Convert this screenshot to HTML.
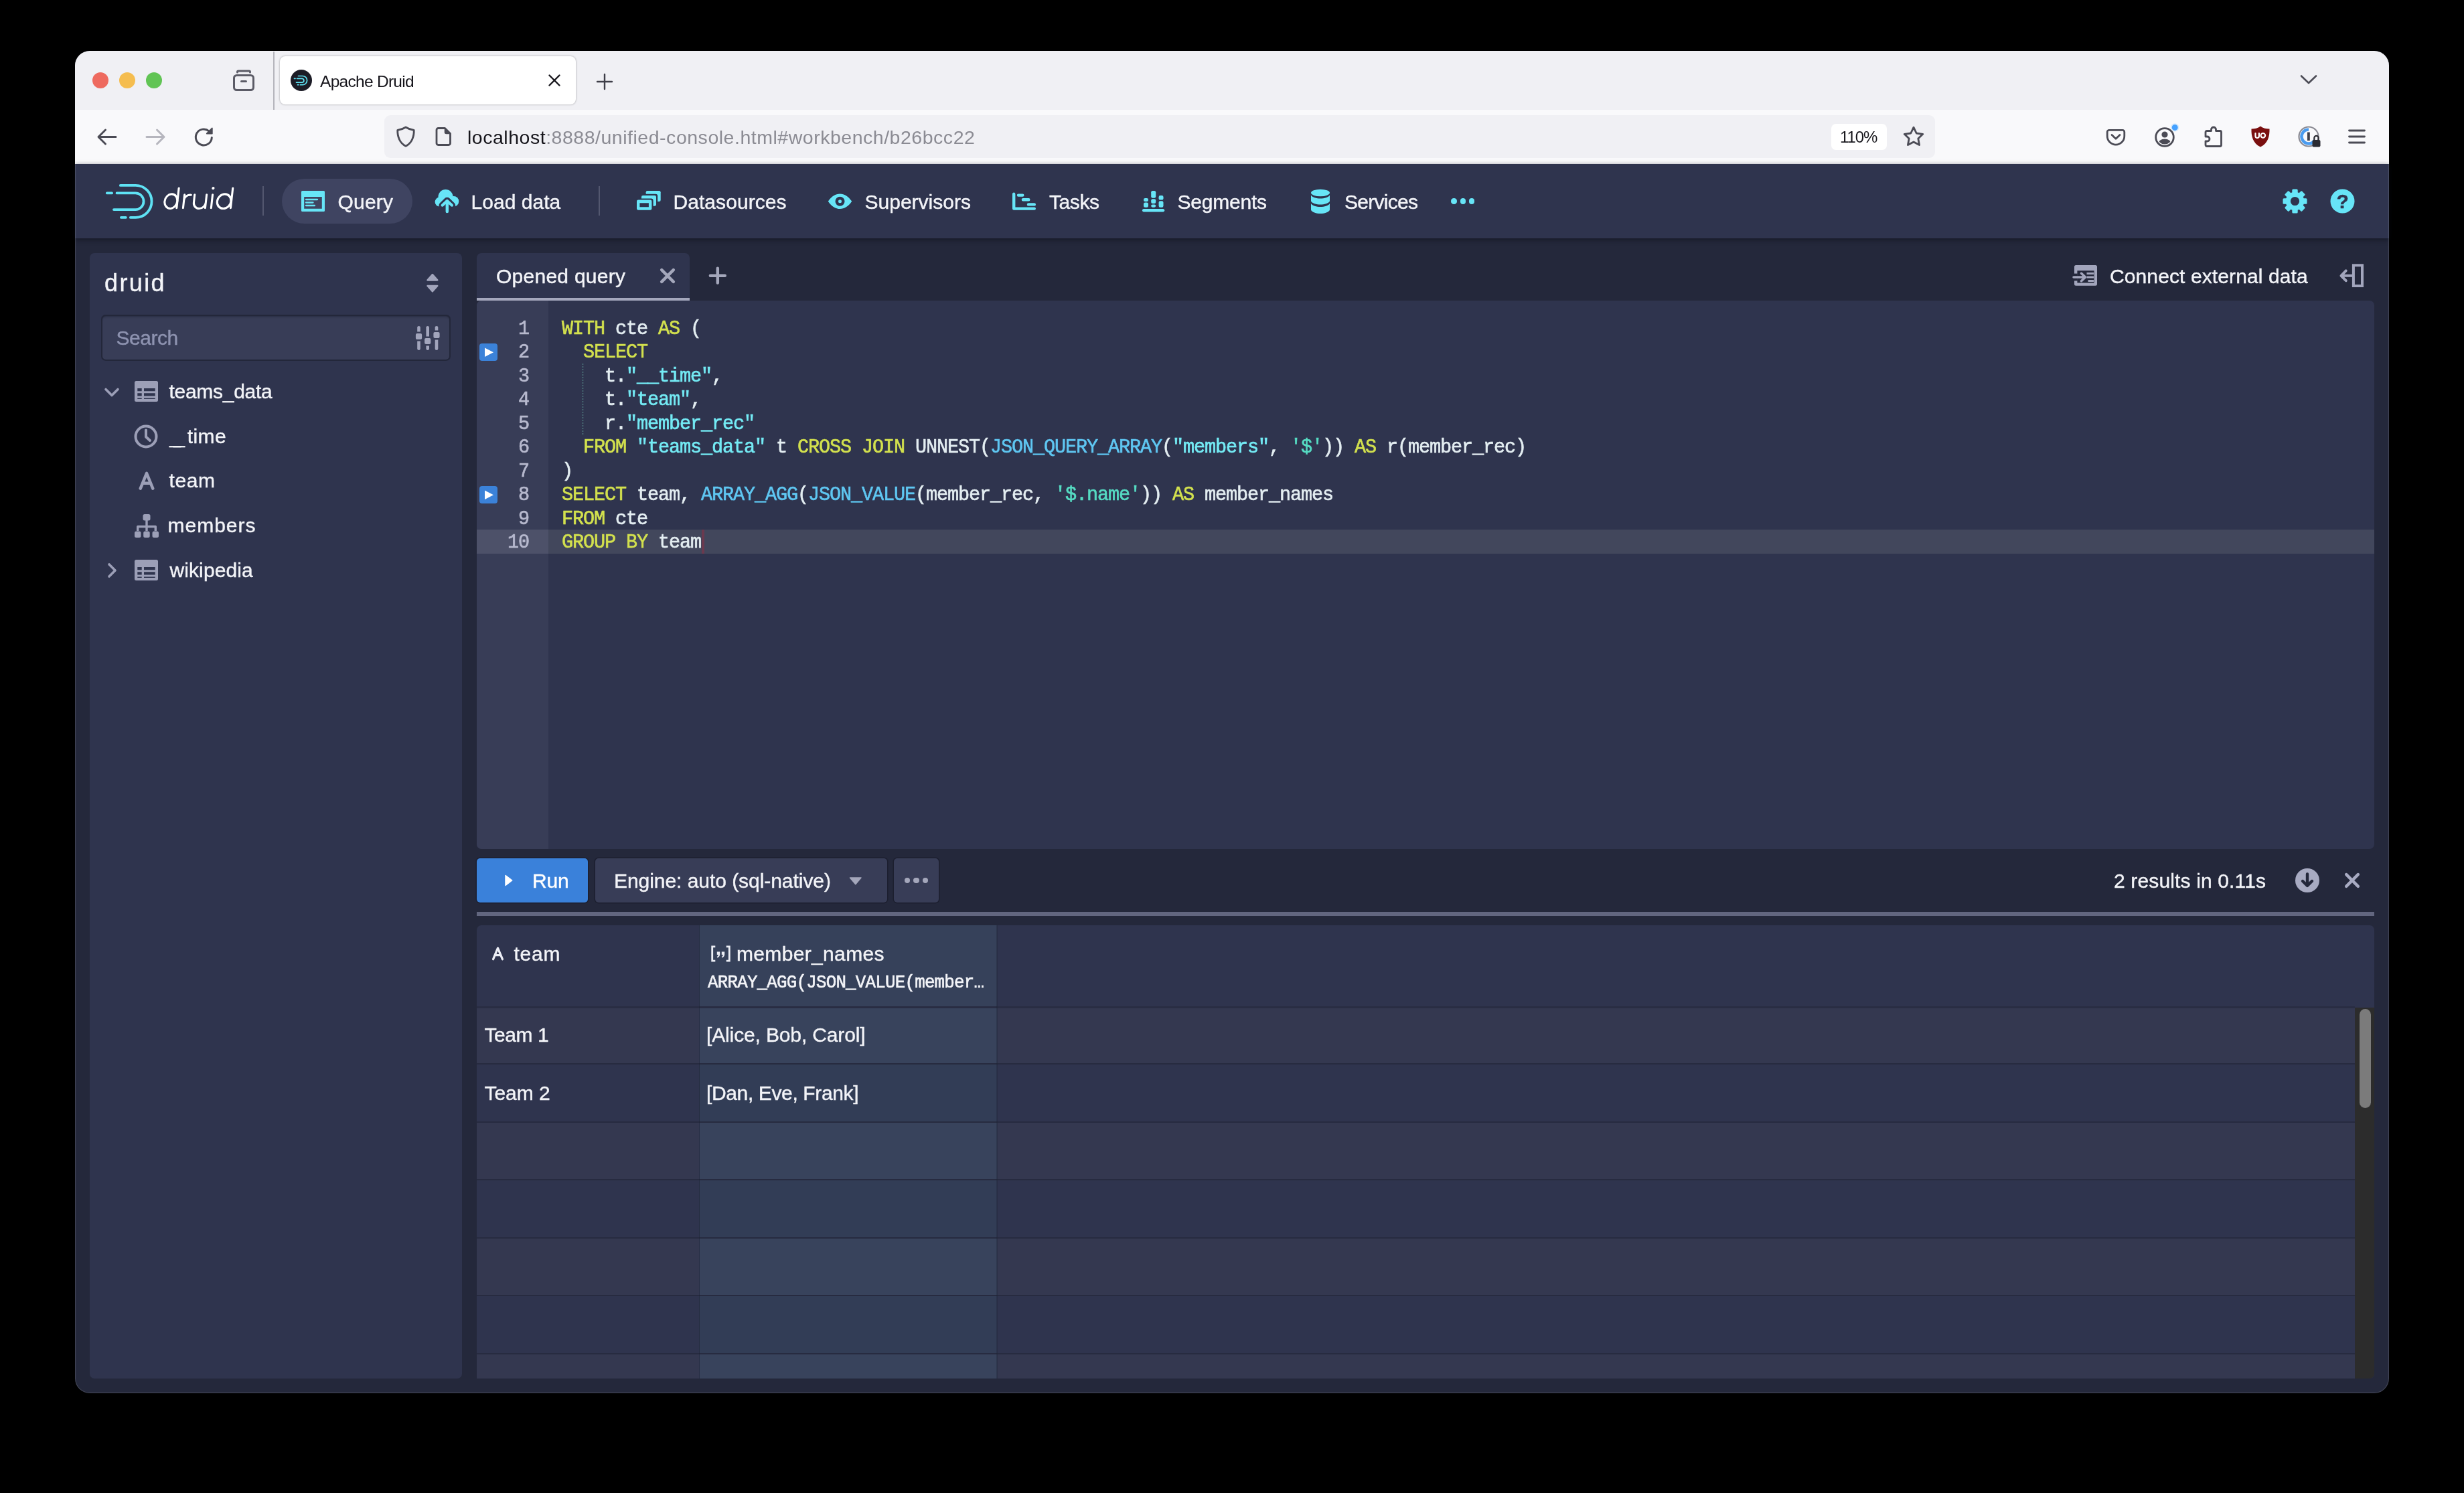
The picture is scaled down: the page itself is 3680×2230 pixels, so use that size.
<!DOCTYPE html>
<html><head><meta charset="utf-8"><title>Apache Druid</title><style>
html,body{margin:0;padding:0;background:#000;}
body{width:3680px;height:2230px;position:relative;overflow:hidden;font-family:"Liberation Sans", sans-serif;}
#r{position:absolute;left:0;top:0;width:3680px;height:2230px;will-change:transform;}
#r div,#r svg,#r span{position:absolute;}
#r span{white-space:pre;line-height:0;}
#r span span{position:static;}
#r .m{font-family:"Liberation Mono", monospace;-webkit-text-stroke:0.600px;}
#r .d{-webkit-text-stroke:0.4px;}
</style></head><body><div id="r">
<div style="left:112px;top:76px;width:3456px;height:2005px;background:#24283b;border-radius:22px;overflow:hidden;"></div>
<div style="left:112px;top:76px;width:3456px;height:88px;background:#f0f0f4;border-radius:22px 22px 0 0;"></div>
<div style="left:112px;top:164px;width:3456px;height:81px;background:#f9f9fb;"></div>
<div style="left:112px;top:245px;width:3456px;height:110.5px;background:#2f344e;box-shadow:0 2px 7px rgba(10,12,22,0.55);"></div>
<div style="left:138px;top:108px;width:24px;height:24px;background:#ee6a5f;border-radius:50%;"></div>
<div style="left:178px;top:108px;width:24px;height:24px;background:#f5bd4f;border-radius:50%;"></div>
<div style="left:218px;top:108px;width:24px;height:24px;background:#61c454;border-radius:50%;"></div>
<div style="left:408.3px;top:77px;width:1.9px;height:87px;background:#b4b4bc;"></div>
<div style="left:418px;top:84px;width:442px;height:72px;background:#ffffff;border-radius:8px;box-shadow:0 0 3px rgba(0,0,0,0.35);"></div>
<div style="left:574px;top:172px;width:2316px;height:63.5px;background:#f0f0f4;border-radius:9px;"></div>
<div style="left:2735px;top:185px;width:83px;height:39px;background:#ffffff;border-radius:7px;"></div>
<div style="left:392.2px;top:278px;width:1.8px;height:44px;background:#53576f;"></div>
<div style="left:894.2px;top:278px;width:1.8px;height:44px;background:#53576f;"></div>
<div style="left:421px;top:267px;width:195px;height:67px;background:#3f4461;border-radius:34px;"></div>
<div style="left:2167.2px;top:296.2px;width:8.6px;height:8.6px;background:#67e5f7;border-radius:50%;"></div>
<div style="left:2180.5px;top:296.2px;width:8.6px;height:8.6px;background:#67e5f7;border-radius:50%;"></div>
<div style="left:2193.7px;top:296.2px;width:8.6px;height:8.6px;background:#67e5f7;border-radius:50%;"></div>
<div style="left:134px;top:378px;width:556px;height:1681px;background:#2f344e;border-radius:7px;"></div>
<div style="left:150.5px;top:469.8px;width:522.8px;height:69.5px;background:#383d57;border-radius:7px;box-shadow:inset 0 0 0 2px #23273a, inset 0 3px 3px rgba(20,22,36,0.45);"></div>
<div style="left:712px;top:378px;width:318px;height:71px;background:#2f344e;border-radius:7px 7px 0 0;"></div>
<div style="left:712px;top:444.6px;width:318px;height:4.4px;background:#a4a7bc;"></div>
<div style="left:712px;top:449px;width:2834px;height:818.5px;background:#2f344e;border-radius:7px;"></div>
<div style="left:712px;top:449px;width:107px;height:818.5px;background:#383d57;border-radius:7px 0 0 7px;"></div>
<div style="left:819px;top:791px;width:2727px;height:35.5px;background:#42475c;"></div>
<div style="left:712px;top:791px;width:107px;height:35.5px;background:#4d5169;"></div>
<div style="left:1048.2px;top:791px;width:3.8px;height:35.5px;background:#6a3a4f;"></div>
<div style="left:716px;top:512.5px;width:27px;height:26.5px;background:#3b82d9;border-radius:4px;"></div>
<div style="left:716px;top:725.5px;width:27px;height:26.5px;background:#3b82d9;border-radius:4px;"></div>
<div style="left:712px;top:1282.3px;width:166px;height:65.4px;background:#3a81da;border-radius:5px;box-shadow:0 0 0 1.500px rgba(20,22,36,0.5);"></div>
<div style="left:888.5px;top:1282.3px;width:436px;height:65.4px;background:#383d57;border-radius:5px;box-shadow:0 0 0 1.500px rgba(20,22,36,0.5);"></div>
<div style="left:1335px;top:1282.3px;width:67.3px;height:65.4px;background:#383d57;border-radius:5px;box-shadow:0 0 0 1.500px rgba(20,22,36,0.5);"></div>
<div style="left:1350.7px;top:1310.7px;width:8.6px;height:8.6px;background:#a4a7bb;border-radius:50%;"></div>
<div style="left:1364.3px;top:1310.7px;width:8.6px;height:8.6px;background:#a4a7bb;border-radius:50%;"></div>
<div style="left:1377.7px;top:1310.7px;width:8.6px;height:8.6px;background:#a4a7bb;border-radius:50%;"></div>
<div style="left:712px;top:1362px;width:2834px;height:6px;background:#62667f;"></div>
<div style="left:712px;top:1382px;width:2834px;height:677px;background:#2f344e;border-radius:7px;overflow:hidden;"></div>
<div style="left:1044px;top:1382px;width:444.5px;height:122.5px;background:#36415a;"></div>
<div style="left:712px;top:1504.7px;width:2804.5px;height:84.3px;background:#343850;"></div>
<div style="left:1044px;top:1504.7px;width:444.5px;height:84.3px;background:#38435c;"></div>
<div style="left:712px;top:1589px;width:2804.5px;height:86.6px;background:#2f344e;"></div>
<div style="left:1044px;top:1589px;width:444.5px;height:86.6px;background:#323d56;"></div>
<div style="left:712px;top:1675.6px;width:2804.5px;height:86.6px;background:#343850;"></div>
<div style="left:1044px;top:1675.6px;width:444.5px;height:86.6px;background:#38435c;"></div>
<div style="left:712px;top:1762.2px;width:2804.5px;height:86.6px;background:#2f344e;"></div>
<div style="left:1044px;top:1762.2px;width:444.5px;height:86.6px;background:#323d56;"></div>
<div style="left:712px;top:1848.8px;width:2804.5px;height:86.6px;background:#343850;"></div>
<div style="left:1044px;top:1848.8px;width:444.5px;height:86.6px;background:#38435c;"></div>
<div style="left:712px;top:1935.4px;width:2804.5px;height:86.6px;background:#2f344e;"></div>
<div style="left:1044px;top:1935.4px;width:444.5px;height:86.6px;background:#323d56;"></div>
<div style="left:712px;top:2022px;width:2804.5px;height:37px;background:#343850;"></div>
<div style="left:1044px;top:2022px;width:444.5px;height:37px;background:#38435c;"></div>
<div style="left:712px;top:1503.4px;width:2804.5px;height:2.6px;background:#292d43;"></div>
<div style="left:712px;top:1587.95px;width:2804.5px;height:2.1px;background:#272b40;"></div>
<div style="left:712px;top:1674.55px;width:2804.5px;height:2.1px;background:#272b40;"></div>
<div style="left:712px;top:1761.15px;width:2804.5px;height:2.1px;background:#272b40;"></div>
<div style="left:712px;top:1847.75px;width:2804.5px;height:2.1px;background:#272b40;"></div>
<div style="left:712px;top:1934.35px;width:2804.5px;height:2.1px;background:#272b40;"></div>
<div style="left:712px;top:2020.95px;width:2804.5px;height:2.1px;background:#272b40;"></div>
<div style="left:1043.7px;top:1382px;width:1.6px;height:677px;background:rgba(30,33,52,0.6);"></div>
<div style="left:1487.5px;top:1382px;width:2px;height:677px;background:rgba(30,33,52,0.35);"></div>
<div style="left:3516.5px;top:1504.5px;width:29.5px;height:554.5px;background:#2c2c2c;border-radius:0 0 7px 0;"></div>
<div style="left:3524px;top:1506.5px;width:16.5px;height:148.5px;background:#7b7b7b;border-radius:8.500px;"></div>
<div style="left:112px;top:76px;width:3456px;height:2005px;background:transparent;border-radius:22px;box-shadow:inset 0 0 0 1.200px rgba(255,255,255,0.130);"></div>
<svg style="left:346px;top:102px;" width="36" height="36" viewBox="0 0 36 36"><g fill="none" stroke="#5b5b66" stroke-width="3" stroke-linecap="round" stroke-linejoin="round"><path d="M8.500 6v-.500a1.500 1.500 0 0 1 1.500-1.500h16a1.500 1.500 0 0 1 1.500 1.500v.500"/><rect x="3.500" y="10.500" width="29" height="22" rx="4"/><path d="M14.500 19.500h7"/></g></svg>
<svg style="left:434px;top:104px;" width="32" height="32" viewBox="0 0 32 32"><circle cx="16" cy="16" r="16" fill="#1c1c26"/><g fill="none" stroke="#5fe4f5" stroke-width="1.7" stroke-linecap="round"><path d="M11.5 9.5h6.5a6.6 6.6 0 0 1 0 13.2h-3.5"/><path d="M9.5 13.3h7.5a2.9 2.9 0 0 1 0 5.8h-8.5"/><path d="M5.5 13.3h1.5"/><path d="M10.5 22.7h1.5"/></g></svg>
<svg style="left:818px;top:110px;" width="20" height="20" viewBox="0 0 20 20"><path d="M2.5 2.5l15 15M17.5 2.5l-15 15" stroke="#15141a" stroke-width="2.4" stroke-linecap="round"/></svg>
<svg style="left:890px;top:109px;" width="26" height="26" viewBox="0 0 26 26"><path d="M13 2v22M2 13h22" stroke="#3e3e48" stroke-width="2.4" stroke-linecap="round"/></svg>
<svg style="left:3434px;top:110px;" width="28" height="18" viewBox="0 0 28 18"><path d="M3 3.5l11 10.5l11-10.5" fill="none" stroke="#4b4b55" stroke-width="2.6" stroke-linecap="round" stroke-linejoin="round"/></svg>
<svg style="left:143px;top:188px;" width="34" height="34" viewBox="0 0 34 34"><path d="M30 16.500H4.500M14.500 6L4 16.500l10.500 10.500" fill="none" stroke="#4b4b55" stroke-width="3" stroke-linecap="round" stroke-linejoin="round"/></svg>
<svg style="left:216px;top:188px;" width="34" height="34" viewBox="0 0 34 34"><path d="M3 16.500h25.500M18.500 6l10.500 10.500l-10.500 10.500" fill="none" stroke="#b6b6be" stroke-width="3" stroke-linecap="round" stroke-linejoin="round"/></svg>
<svg style="left:288px;top:187px;" width="34" height="34" viewBox="0 0 34 34"><g fill="none" stroke="#4b4b55" stroke-width="3" stroke-linecap="round" stroke-linejoin="round"><path d="M28.300 18.500a12 12 0 1 1-4.200-9.700"/><path d="M28.800 4.500v8h-8z" fill="#4b4b55" stroke-width="1.800"/></g></svg>
<svg style="left:590px;top:187px;" width="32" height="34" viewBox="0 0 32 34"><path d="M16 3C12.500 5.300 8 6.800 3.800 7.300c-.400 9.500 3.200 19.700 12.200 23.900C25 27 28.600 16.800 28.200 7.300C24 6.800 19.500 5.300 16 3z" fill="none" stroke="#4b4b55" stroke-width="2.800" stroke-linejoin="round"/></svg>
<svg style="left:649px;top:189px;" width="28" height="30" viewBox="0 0 28 30"><path d="M5.500 2.500h10l8 8v14.500a2.500 2.500 0 0 1-2.500 2.500h-15.500a2.500 2.500 0 0 1-2.500-2.500v-20a2.500 2.500 0 0 1 2.500-2.500z" fill="none" stroke="#4b4b55" stroke-width="2.800" stroke-linejoin="round"/><path d="M15.500 2.500l8 8h-6a2 2 0 0 1-2-2z" fill="#4b4b55" stroke="#4b4b55" stroke-width="1.500" stroke-linejoin="round"/></svg>
<svg style="left:2841px;top:187px;" width="34" height="34" viewBox="0 0 34 34"><path d="M17 3.200l4.200 8.800l9.600 1.300l-7 6.700l1.800 9.600l-8.600-4.700l-8.600 4.700l1.800-9.600l-7-6.700l9.600-1.300z" fill="none" stroke="#4b4b55" stroke-width="2.800" stroke-linejoin="round"/></svg>
<svg style="left:3144px;top:189px;" width="32" height="30" viewBox="0 0 32 30"><path d="M6 5.300h20a2.800 2.800 0 0 1 2.800 2.800v6.200a12.800 12.800 0 0 1-25.600 0v-6.200a2.800 2.800 0 0 1 2.800-2.800z" fill="none" stroke="#4b4b55" stroke-width="2.800"/><path d="M10 12.500l6 5.800l6-5.800" fill="none" stroke="#4b4b55" stroke-width="2.800" stroke-linecap="round" stroke-linejoin="round"/></svg>
<svg style="left:3216px;top:182px;" width="44" height="40" viewBox="0 0 44 40"><defs><clipPath id="acc"><circle cx="17" cy="23" r="10.600"/></clipPath></defs><circle cx="17" cy="23" r="13.300" fill="none" stroke="#4b4b55" stroke-width="2.800"/><circle cx="17" cy="19" r="4.600" fill="#4b4b55"/><ellipse cx="17" cy="33" rx="10" ry="7.500" fill="#4b4b55" clip-path="url(#acc)"/><circle cx="32.200" cy="8.400" r="5.300" fill="#45a1ff" stroke="#d3e8fb" stroke-width="1.600"/></svg>
<svg style="left:3290px;top:187px;" width="32" height="34" viewBox="0 0 32 34"><path d="M12.500 8.500v-2a3.500 3.500 0 0 1 7 0v2h6a2 2 0 0 1 2 2v19a2 2 0 0 1-2 2h-19.500a2 2 0 0 1-2-2v-5.500h2.500a3.500 3.500 0 0 0 0-7h-2.500v-6.500a2 2 0 0 1 2-2z" fill="none" stroke="#4b4b55" stroke-width="2.800" stroke-linejoin="round"/></svg>
<svg style="left:3361px;top:187px;" width="30" height="34" viewBox="0 0 30 34"><path d="M15 1.500c4 3 8.500 4 13.500 4c.300 10.500-2 21.500-13.500 27c-11.500-5.500-13.800-16.500-13.500-27c5 0 9.500-1 13.500-4z" fill="#7a0f0f"/><g fill="none" stroke="#fff" stroke-width="2.200" stroke-linecap="round"><path d="M7.500 12v4.300a2.700 2.700 0 0 0 5.400 0v-4.300"/><circle cx="18.800" cy="15.300" r="3.300"/></g></svg>
<svg style="left:3431px;top:187px;" width="36" height="36" viewBox="0 0 36 36"><circle cx="17" cy="17" r="14.500" fill="none" stroke="#8a8a93" stroke-width="2.200"/><path d="M17 6.500a10.500 10.500 0 1 0 9 16" fill="none" stroke="#4a9cf0" stroke-width="4.500"/><rect x="15" y="10.500" width="3.800" height="12.500" fill="#3e3e48"/><rect x="22.500" y="22" width="12" height="10.500" rx="2" fill="#2b2b33"/><path d="M25.300 22v-3a3.200 3.200 0 0 1 6.400 0v3" fill="none" stroke="#2b2b33" stroke-width="2.200"/></svg>
<svg style="left:3506px;top:190px;" width="28" height="28" viewBox="0 0 28 28"><path d="M2.500 5h23M2.500 14h23M2.500 23h23" stroke="#4b4b55" stroke-width="2.800" stroke-linecap="round"/></svg>
<svg style="left:140px;top:262px;" width="220" height="78" viewBox="0 0 220 78"><g fill="none" stroke="#5fe2f4" stroke-width="3.800" stroke-linecap="round"><path d="M39.850 14.900H62.600A23.950 23.950 0 0 1 62.600 62.800H54.800"/><path d="M40.900 62.800H47.900"/><path d="M34.500 26.400H62.200A12.350 12.350 0 0 1 62.200 51.100H30"/><path d="M19.800 26.400H27.100"/></g><g transform="translate(0 50) skewX(-6.300) translate(0 -50)" fill="none" stroke="#ffffff" stroke-width="3.100" stroke-linecap="round" stroke-linejoin="round"><ellipse cx="114.100" cy="38.700" rx="9.400" ry="10.800"/><path d="M123.700 19V48.600"/><path d="M133.300 28.800V48.600M133.300 36.500C133.800 31.500 138 28.600 143 29.200"/><path d="M148.400 28.800V40.500A8.950 9 0 0 0 166.300 40.500M166.300 28.800V48.600"/><path d="M175.200 28.800V48.600"/><circle cx="175" cy="19.200" r="1.200" fill="#fff" stroke-width="1.800"/><ellipse cx="193.400" cy="38.700" rx="10.300" ry="10.800"/><path d="M204.300 19V48.600"/></g></svg>
<svg style="left:450px;top:285px;" width="35" height="31" viewBox="0 0 35 31"><path d="M1.500 0h32a1.500 1.500 0 0 1 1.500 1.500v28a1.500 1.500 0 0 1-1.500 1.500h-32a1.500 1.500 0 0 1-1.500-1.500v-28a1.500 1.500 0 0 1 1.500-1.500zM4.200 9v17.800h26.600v-17.800z" fill="#67e5f7" fill-rule="evenodd"/><path d="M7 13h17M7 17.500h10.500M7 22h13" stroke="#67e5f7" stroke-width="2.300" stroke-linecap="round"/></svg>
<svg style="left:648px;top:282px;" width="40" height="38" viewBox="0 0 40 38"><g fill="#67e5f7"><circle cx="17.500" cy="12" r="11"/><circle cx="29.600" cy="18.700" r="7.700"/><circle cx="8.600" cy="19.600" r="7"/><rect x="8.600" y="14" width="21" height="12.600"/></g><path d="M19.800 34.300v-16.300M12.600 25l7.200-7l7.200 7" fill="none" stroke="#2f344e" stroke-width="10.400" stroke-linecap="round" stroke-linejoin="round"/><path d="M19.800 34v-15.500M12.800 24.500l7-6.500l7 6.500" fill="none" stroke="#67e5f7" stroke-width="4.400" stroke-linecap="round" stroke-linejoin="round"/></svg>
<svg style="left:949px;top:283px;" width="40" height="33" viewBox="0 0 40 33"><rect x="15.700" y="2" width="22" height="16" rx="2.200" fill="#67e5f7"/><rect x="6.800" y="6.800" width="26.400" height="20" rx="3" fill="#2f344e"/><rect x="9" y="9" width="22" height="15.700" rx="2.200" fill="#67e5f7"/><rect x="-0.200" y="13.400" width="26.800" height="20" rx="3" fill="#2f344e"/><path d="M4.200 15.600h18a2.200 2.200 0 0 1 2.200 2.200v10.800a2.200 2.200 0 0 1-2.200 2.200h-18a2.200 2.200 0 0 1-2.200-2.200v-10.800a2.200 2.200 0 0 1 2.200-2.200zM6.400 20.200v6.100h13.500v-6.100z" fill="#67e5f7" fill-rule="evenodd"/></svg>
<svg style="left:1236px;top:288px;" width="38" height="26" viewBox="0 0 38 26"><path d="M0.800 12.700C6 5 12 1.400 18.500 1.400S31 5 36.200 12.700C31 20.400 25 24 18.500 24S6 20.400 0.800 12.700zM18.500 5.700a7 7 0 1 0 0 14a7 7 0 0 0 0-14zM18.500 10.200a2.500 2.500 0 1 1 0 5a2.500 2.500 0 0 1 0-5z" fill="#67e5f7" fill-rule="evenodd"/></svg>
<svg style="left:1511px;top:286px;" width="38" height="30" viewBox="0 0 38 30"><g stroke="#67e5f7" stroke-linecap="round" stroke-linejoin="round" fill="none" stroke-width="4.400"><path d="M3.200 3.700v21.900h30.600"/><path d="M10 5.600h6.300M16.900 12.300h8.400M25 19.400h8.800"/></g></svg>
<svg style="left:1705px;top:284px;" width="36" height="34" viewBox="0 0 36 34"><g fill="#67e5f7"><rect x="1.0" y="28.0" width="33.2" height="4.5" rx="2.200"/><rect x="3.0" y="12.0" width="7.0" height="5.0" rx="2.200"/><rect x="3.0" y="18.4" width="7.0" height="7.3" rx="2.200"/><rect x="14.2" y="1.0" width="7.0" height="10.7" rx="2.200"/><rect x="14.2" y="13.2" width="7.0" height="6.7" rx="2.200"/><rect x="14.2" y="21.4" width="7.0" height="4.3" rx="2.200"/><rect x="25.6" y="8.0" width="6.9" height="6.6" rx="2.200"/><rect x="25.6" y="16.2" width="6.9" height="9.5" rx="2.200"/></g></svg>
<svg style="left:1957px;top:282px;" width="30" height="38" viewBox="0 0 30 38"><g fill="#67e5f7"><ellipse cx="15" cy="6" rx="14" ry="5.200"/><path d="M1 9.500c2 3.500 8 5 14 5s12-1.500 14-5v9c-2 3.500-8 5-14 5s-12-1.500-14-5z"/><path d="M1 22c2 3.500 8 5 14 5s12-1.500 14-5v9.500c-1 3.500-8 5.500-14 5.500s-13-2-14-5.500z"/></g></svg>
<svg style="left:3409px;top:282px;" width="37" height="37" viewBox="0 0 37 37"><g transform="translate(18.500 18.500)" fill="#67e5f7"><rect x="-4.200" y="-18" width="8.400" height="9" rx="1.500" transform="rotate(0)"/><rect x="-4.200" y="-18" width="8.400" height="9" rx="1.500" transform="rotate(45)"/><rect x="-4.200" y="-18" width="8.400" height="9" rx="1.500" transform="rotate(90)"/><rect x="-4.200" y="-18" width="8.400" height="9" rx="1.500" transform="rotate(135)"/><rect x="-4.200" y="-18" width="8.400" height="9" rx="1.500" transform="rotate(180)"/><rect x="-4.200" y="-18" width="8.400" height="9" rx="1.500" transform="rotate(225)"/><rect x="-4.200" y="-18" width="8.400" height="9" rx="1.500" transform="rotate(270)"/><rect x="-4.200" y="-18" width="8.400" height="9" rx="1.500" transform="rotate(315)"/><path d="M0-13.800a13.800 13.800 0 1 0 0 27.600a13.800 13.800 0 0 0 0-27.600zM0-6.600a6.600 6.600 0 1 1 0 13.200a6.600 6.600 0 0 1 0-13.200z" fill-rule="evenodd"/></g></svg>
<svg style="left:3480px;top:282px;" width="37" height="37" viewBox="0 0 37 37"><circle cx="18.500" cy="18.500" r="18" fill="#67e5f7"/></svg>
<svg style="left:635px;top:407px;" width="22" height="32" viewBox="0 0 22 32"><path d="M10.900 3.200l7.300 8.200h-14.600z M10.900 28.200l7.300-8.200h-14.600z" fill="#a2a5bc" stroke="#a2a5bc" stroke-width="2.600" stroke-linejoin="round"/></svg>
<svg style="left:618px;top:485px;" width="42" height="40" viewBox="0 0 42 40"><g fill="#a2a5bc"><rect x="5.200" y="2" width="4.600" height="36" rx="2.300"/><rect x="18.400" y="2" width="4.600" height="36" rx="2.300"/><rect x="31.700" y="2" width="4.600" height="36" rx="2.300"/></g><g fill="#a2a5bc" stroke="#383d57" stroke-width="2.400"><rect x="1.700" y="11.800" width="11.600" height="11.400" rx="3.200"/><rect x="14.900" y="18.800" width="11.600" height="11.400" rx="3.200"/><rect x="28.200" y="9.800" width="11.600" height="11.400" rx="3.200"/></g></svg>
<svg style="left:155px;top:574px;" width="24" height="24" viewBox="0 0 24 24"><path d="M3 7.500l9 9l9-9" fill="none" stroke="#9c9fb7" stroke-width="3.600" stroke-linecap="round" stroke-linejoin="round"/></svg>
<svg style="left:155px;top:840px;" width="24" height="24" viewBox="0 0 24 24"><path d="M8 3l9 9l-9 9" fill="none" stroke="#9c9fb7" stroke-width="3.600" stroke-linecap="round" stroke-linejoin="round"/></svg>
<svg style="left:201px;top:569px;" width="35" height="31" viewBox="0 0 35 31"><path d="M2.500 0h30a2.500 2.500 0 0 1 2.500 2.500v26a2.500 2.500 0 0 1-2.500 2.500h-30a2.500 2.500 0 0 1-2.500-2.500v-26a2.500 2.500 0 0 1 2.500-2.500z M4.300 11v4.200h6.400v-4.200z M4.300 18.200v4.200h6.400v-4.200z M4.300 25.400v1.600h6.400v-1.600z M14 11v4.200h16.700v-4.200z M14 18.200v4.200h16.700v-4.200z M14 25.400v1.600h16.700v-1.600z" fill="#9c9fb7" fill-rule="evenodd"/></svg>
<svg style="left:201px;top:836px;" width="35" height="31" viewBox="0 0 35 31"><path d="M2.500 0h30a2.500 2.500 0 0 1 2.500 2.500v26a2.500 2.500 0 0 1-2.500 2.500h-30a2.500 2.500 0 0 1-2.500-2.500v-26a2.500 2.500 0 0 1 2.500-2.500z M4.300 11v4.200h6.400v-4.200z M4.300 18.200v4.200h6.400v-4.200z M4.300 25.400v1.600h6.400v-1.600z M14 11v4.200h16.700v-4.200z M14 18.200v4.200h16.700v-4.200z M14 25.400v1.600h16.700v-1.600z" fill="#9c9fb7" fill-rule="evenodd"/></svg>
<svg style="left:200px;top:634px;" width="36" height="36" viewBox="0 0 36 36"><circle cx="18" cy="18" r="15.500" fill="none" stroke="#9c9fb7" stroke-width="4"/><path d="M18 8.500v10l6 5.500" fill="none" stroke="#9c9fb7" stroke-width="4" stroke-linecap="round" stroke-linejoin="round"/></svg>
<svg style="left:207px;top:704px;" width="24" height="28" viewBox="0 0 24 28"><path d="M2.800 25.500l9.200-22.500l9.200 22.500M6.500 17.800h11" fill="none" stroke="#9c9fb7" stroke-width="4.600" stroke-linecap="round" stroke-linejoin="round"/></svg>
<svg style="left:201px;top:768px;" width="36" height="36" viewBox="0 0 36 36"><g fill="#9c9fb7"><rect x="12.500" y="0" width="11" height="9.500" rx="2.500"/><rect x="0" y="25.500" width="9.500" height="9.500" rx="2.500"/><rect x="13.200" y="25.500" width="9.500" height="9.500" rx="2.500"/><rect x="26.500" y="25.500" width="9.500" height="9.500" rx="2.500"/></g><path d="M18 9v16M4.700 25v-6.500h26.600v6.500" fill="none" stroke="#9c9fb7" stroke-width="3.400" stroke-linejoin="round"/></svg>
<svg style="left:985px;top:400px;" width="24" height="24" viewBox="0 0 24 24"><path d="M3.200 3.200l17.600 17.600M20.800 3.200l-17.600 17.600" stroke="#a4a7bb" stroke-width="4.500" stroke-linecap="round"/></svg>
<svg style="left:1058px;top:398px;" width="28" height="28" viewBox="0 0 28 28"><path d="M13.800 2.800v21.800M2.900 13.700h21.800" stroke="#a4a7bb" stroke-width="4.500" stroke-linecap="round"/></svg>
<svg style="left:3094px;top:396.2px;" width="40" height="31" viewBox="0 0 40 31"><g transform="translate(4 0)"><path d="M2.500 0h29a2.500 2.500 0 0 1 2.500 2.500v25.800a2.500 2.500 0 0 1-2.500 2.500h-29a2.500 2.500 0 0 1-2.500-2.500v-25.800a2.500 2.500 0 0 1 2.500-2.500zM4.400 8.200v18.200h25.200v-18.200z" fill="#a2a5bc" fill-rule="evenodd"/><rect x="-1" y="12.600" width="5.800" height="10.800" fill="#24283b"/><path d="M-1 18h14.500M10.500 12.300l6 5.700l-6 5.700" fill="none" stroke="#a2a5bc" stroke-width="3.600" stroke-linecap="round" stroke-linejoin="round"/><path d="M18.500 12.600h10.500M18.500 18h10.500M20.500 23.500h8.500" stroke="#a2a5bc" stroke-width="3"/></g></svg>
<svg style="left:3492px;top:392px;" width="40" height="39" viewBox="0 0 40 39"><rect x="22.900" y="4.300" width="13.100" height="30.700" fill="none" stroke="#a2a5bc" stroke-width="4"/><path d="M5 19.800h16.500M11.700 12.400l-7.200 7.400l7.200 7.400" fill="none" stroke="#a2a5bc" stroke-width="4" stroke-linejoin="round" stroke-linecap="round"/></svg>
<svg style="left:869px;top:542.5px;" width="3" height="106.5" viewBox="0 0 3 106.5"><path d="M1.500 0v106.5" stroke="#4f7a7f" stroke-width="1.500" stroke-dasharray="2 2"/></svg>
<svg style="left:716px;top:512.5px;" width="27" height="26.5" viewBox="0 0 27 26.5"><path d="M8 6.500l13 6.700l-13 6.700z" fill="#fff"/></svg>
<svg style="left:716px;top:725.5px;" width="27" height="26.5" viewBox="0 0 27 26.5"><path d="M8 6.500l13 6.700l-13 6.700z" fill="#fff"/></svg>
<svg style="left:752px;top:1305px;" width="16" height="20" viewBox="0 0 16 20"><path d="M3 2.500l9.700 7.500l-9.700 7.500z" fill="#fff" stroke="#fff" stroke-width="1.500" stroke-linejoin="round"/></svg>
<svg style="left:1267px;top:1308px;" width="22" height="15" viewBox="0 0 22 15"><path d="M2.500 3h16.500l-8.250 9.800z" fill="#a4a7bb" stroke="#a4a7bb" stroke-width="1.500" stroke-linejoin="round"/></svg>
<svg style="left:3427.5px;top:1296.5px;" width="36" height="36" viewBox="0 0 36 36"><circle cx="18" cy="18" r="18" fill="#a8abc2"/><path d="M18 8.500v17M11 19l7 7l7-7" fill="none" stroke="#24283b" stroke-width="4.400" stroke-linecap="round" stroke-linejoin="round"/></svg>
<svg style="left:3501px;top:1303px;" width="24" height="24" viewBox="0 0 24 24"><path d="M3.200 3.200l17.600 17.600M20.800 3.200l-17.600 17.600" stroke="#a8abc2" stroke-width="4.500" stroke-linecap="round"/></svg>
<svg style="left:732px;top:1412px;" width="24" height="25" viewBox="0 0 24 25"><path d="M4.600 20.700l6.900-16.500l6.900 16.500M7.300 14.600h8.400" fill="none" stroke="#eceef5" stroke-width="3.300" stroke-linecap="round" stroke-linejoin="round"/></svg>
<svg style="left:1061px;top:1411px;" width="32" height="28" viewBox="0 0 32 28"><g fill="none" stroke="#eceef5" stroke-width="2.800" stroke-linejoin="miter"><path d="M7.300 2.800h-4.600v21.400h4.600"/><path d="M23.700 2.800h4.600v21.400h-4.600"/></g><g fill="#eceef5"><path d="M9.800 10.600h4.400v3.600c0 2.600-1.300 4.400-3.800 5.200l-.700-1.500c1.300-.600 2-1.500 2.100-2.900h-2z"/><path d="M16.800 10.600h4.400v3.600c0 2.600-1.300 4.400-3.800 5.200l-.700-1.500c1.300-.600 2-1.500 2.100-2.900h-2z"/></g></svg>
<span id="t0" style="left:478.00px;top:121.51px;font-size:24.5px;color:#15141a;letter-spacing:-0.711px;">Apache Druid</span>
<span id="t1" style="left:698.00px;top:205.12px;font-size:28.5px;color:#15141a;letter-spacing:0.518px;">localhost<span style="color:#8b8b93">:8888/unified-console.html#workbench/b26bcc22</span></span>
<span id="t2" style="left:2748.00px;top:205.18px;font-size:24px;color:#15141a;letter-spacing:-1.087px;">110%</span>
<span id="t3" class="d" style="left:504.50px;top:301.61px;font-size:30px;color:#f3f4f8;letter-spacing:0.201px;">Query</span>
<span id="t4" class="d" style="left:703.50px;top:301.61px;font-size:30px;color:#f3f4f8;letter-spacing:0.028px;">Load data</span>
<span id="t5" class="d" style="left:1005.50px;top:301.61px;font-size:30px;color:#f3f4f8;letter-spacing:0.059px;">Datasources</span>
<span id="t6" class="d" style="left:1291.50px;top:301.61px;font-size:30px;color:#f3f4f8;letter-spacing:0.011px;">Supervisors</span>
<span id="t7" class="d" style="left:1567.00px;top:301.61px;font-size:30px;color:#f3f4f8;letter-spacing:-0.421px;">Tasks</span>
<span id="t8" class="d" style="left:1758.50px;top:301.61px;font-size:30px;color:#f3f4f8;letter-spacing:-0.225px;">Segments</span>
<span id="t9" class="d" style="left:2008.00px;top:301.61px;font-size:30px;color:#f3f4f8;letter-spacing:-0.719px;">Services</span>
<span id="t10" class="d" style="left:3489.50px;top:300.61px;font-size:30px;color:#2f344e;font-weight:bold;">?</span>
<span id="t11" class="d" style="left:156.00px;top:422.53px;font-size:36px;color:#f3f4f8;letter-spacing:2.368px;">druid</span>
<span id="t12" class="d" style="left:173.50px;top:505.11px;font-size:30px;color:#8e93b0;letter-spacing:-0.474px;">Search</span>
<span id="t13" class="d" style="left:252.50px;top:584.61px;font-size:30px;color:#f3f4f8;letter-spacing:-0.287px;">teams_data</span>
<span id="t14" class="d" style="left:253.50px;top:851.61px;font-size:30px;color:#f3f4f8;letter-spacing:0.098px;">wikipedia</span>
<span id="t15" class="d" style="left:253.30px;top:651.61px;font-size:30px;color:#f3f4f8;letter-spacing:-10.685px;">__</span>
<span id="t16" class="d" style="left:279.80px;top:651.61px;font-size:30px;color:#f3f4f8;letter-spacing:0.403px;">time</span>
<span id="t17" class="d" style="left:252.50px;top:718.11px;font-size:30px;color:#f3f4f8;letter-spacing:0.599px;">team</span>
<span id="t18" class="d" style="left:250.50px;top:785.11px;font-size:30px;color:#f3f4f8;letter-spacing:0.996px;">members</span>
<span id="t19" class="d" style="left:741.00px;top:412.61px;font-size:30px;color:#f3f4f8;letter-spacing:0.260px;">Opened query</span>
<span id="t20" class="d" style="left:3151.00px;top:412.61px;font-size:30px;color:#f3f4f8;letter-spacing:0.108px;">Connect external data</span>
<span id="t21" class="m" style="left:839.00px;top:491.50px;font-size:28.5px;color:#e4eef2;letter-spacing:-1.103px;transform:scaleY(1.066);transform-origin:0 7.60px;"><span style="color:#d3e14e">WITH</span> cte <span style="color:#d3e14e">AS</span> (</span>
<span id="t22" class="m" style="left:774.00px;top:491.50px;font-size:28.5px;color:#b7b9ce;letter-spacing:-1.103px;transform:scaleY(1.066);transform-origin:0 7.60px;">1</span>
<span id="t23" class="m" style="left:839.00px;top:527.00px;font-size:28.5px;color:#e4eef2;letter-spacing:-1.103px;transform:scaleY(1.066);transform-origin:0 7.60px;">  <span style="color:#d3e14e">SELECT</span></span>
<span id="t24" class="m" style="left:774.00px;top:527.00px;font-size:28.5px;color:#b7b9ce;letter-spacing:-1.103px;transform:scaleY(1.066);transform-origin:0 7.60px;">2</span>
<span id="t25" class="m" style="left:839.00px;top:562.50px;font-size:28.5px;color:#e4eef2;letter-spacing:-1.103px;transform:scaleY(1.066);transform-origin:0 7.60px;">    t.<span style="color:#74ebf5">"__time"</span>,</span>
<span id="t26" class="m" style="left:774.00px;top:562.50px;font-size:28.5px;color:#b7b9ce;letter-spacing:-1.103px;transform:scaleY(1.066);transform-origin:0 7.60px;">3</span>
<span id="t27" class="m" style="left:839.00px;top:598.00px;font-size:28.5px;color:#e4eef2;letter-spacing:-1.103px;transform:scaleY(1.066);transform-origin:0 7.60px;">    t.<span style="color:#74ebf5">"team"</span>,</span>
<span id="t28" class="m" style="left:774.00px;top:598.00px;font-size:28.5px;color:#b7b9ce;letter-spacing:-1.103px;transform:scaleY(1.066);transform-origin:0 7.60px;">4</span>
<span id="t29" class="m" style="left:839.00px;top:633.50px;font-size:28.5px;color:#e4eef2;letter-spacing:-1.103px;transform:scaleY(1.066);transform-origin:0 7.60px;">    r.<span style="color:#74ebf5">"member_rec"</span></span>
<span id="t30" class="m" style="left:774.00px;top:633.50px;font-size:28.5px;color:#b7b9ce;letter-spacing:-1.103px;transform:scaleY(1.066);transform-origin:0 7.60px;">5</span>
<span id="t31" class="m" style="left:839.00px;top:669.00px;font-size:28.5px;color:#e4eef2;letter-spacing:-1.103px;transform:scaleY(1.066);transform-origin:0 7.60px;">  <span style="color:#d3e14e">FROM</span> <span style="color:#74ebf5">"teams_data"</span> t <span style="color:#d3e14e">CROSS JOIN</span> UNNEST(<span style="color:#5fc7f2">JSON_QUERY_ARRAY</span>(<span style="color:#74ebf5">"members"</span>, <span style="color:#56dcc3">'$'</span>)) <span style="color:#d3e14e">AS</span> r(member_rec)</span>
<span id="t32" class="m" style="left:774.00px;top:669.00px;font-size:28.5px;color:#b7b9ce;letter-spacing:-1.103px;transform:scaleY(1.066);transform-origin:0 7.60px;">6</span>
<span id="t33" class="m" style="left:839.00px;top:704.50px;font-size:28.5px;color:#e4eef2;letter-spacing:-1.103px;transform:scaleY(1.066);transform-origin:0 7.60px;">)</span>
<span id="t34" class="m" style="left:774.00px;top:704.50px;font-size:28.5px;color:#b7b9ce;letter-spacing:-1.103px;transform:scaleY(1.066);transform-origin:0 7.60px;">7</span>
<span id="t35" class="m" style="left:839.00px;top:740.00px;font-size:28.5px;color:#e4eef2;letter-spacing:-1.103px;transform:scaleY(1.066);transform-origin:0 7.60px;"><span style="color:#d3e14e">SELECT</span> team, <span style="color:#5fc7f2">ARRAY_AGG</span>(<span style="color:#5fc7f2">JSON_VALUE</span>(member_rec, <span style="color:#56dcc3">'$.name'</span>)) <span style="color:#d3e14e">AS</span> member_names</span>
<span id="t36" class="m" style="left:774.00px;top:740.00px;font-size:28.5px;color:#b7b9ce;letter-spacing:-1.103px;transform:scaleY(1.066);transform-origin:0 7.60px;">8</span>
<span id="t37" class="m" style="left:839.00px;top:775.50px;font-size:28.5px;color:#e4eef2;letter-spacing:-1.103px;transform:scaleY(1.066);transform-origin:0 7.60px;"><span style="color:#d3e14e">FROM</span> cte</span>
<span id="t38" class="m" style="left:774.00px;top:775.50px;font-size:28.5px;color:#b7b9ce;letter-spacing:-1.103px;transform:scaleY(1.066);transform-origin:0 7.60px;">9</span>
<span id="t39" class="m" style="left:839.00px;top:811.00px;font-size:28.5px;color:#e4eef2;letter-spacing:-1.103px;transform:scaleY(1.066);transform-origin:0 7.60px;"><span style="color:#d3e14e">GROUP BY</span> team</span>
<span id="t40" class="m" style="left:758.00px;top:811.00px;font-size:28.5px;color:#b7b9ce;letter-spacing:-1.103px;transform:scaleY(1.066);transform-origin:0 7.60px;">10</span>
<span id="t41" class="d" style="left:795.00px;top:1315.61px;font-size:30px;color:#ffffff;letter-spacing:-0.175px;">Run</span>
<span id="t42" class="d" style="left:917.00px;top:1315.61px;font-size:30px;color:#f3f4f8;letter-spacing:-0.050px;">Engine: auto (sql-native)</span>
<span id="t43" class="d" style="left:3157.00px;top:1315.61px;font-size:30px;color:#f3f4f8;letter-spacing:0.143px;">2 results in 0.11s</span>
<span id="t44" class="d" style="left:767.50px;top:1424.61px;font-size:30px;color:#f3f4f8;letter-spacing:0.765px;">team</span>
<span id="t45" class="d" style="left:1100.00px;top:1424.61px;font-size:30px;color:#f3f4f8;letter-spacing:0.341px;">member_names</span>
<span id="t46" class="m" style="left:1057.00px;top:1469.12px;font-size:25.8px;color:#f3f4f8;letter-spacing:-0.758px;transform:scaleY(1.05);transform-origin:0 6.88px;">ARRAY_AGG(JSON_VALUE(member…</span>
<span id="t47" class="d" style="left:723.50px;top:1546.31px;font-size:30px;color:#f3f4f8;letter-spacing:-0.439px;">Team 1</span>
<span id="t48" class="d" style="left:723.50px;top:1633.31px;font-size:30px;color:#f3f4f8;letter-spacing:-0.039px;">Team 2</span>
<span id="t49" class="d" style="left:1055.00px;top:1546.31px;font-size:30px;color:#f3f4f8;letter-spacing:-0.137px;">[Alice, Bob, Carol]</span>
<span id="t50" class="d" style="left:1055.00px;top:1633.31px;font-size:30px;color:#f3f4f8;letter-spacing:-0.368px;">[Dan, Eve, Frank]</span>
</div></body></html>
